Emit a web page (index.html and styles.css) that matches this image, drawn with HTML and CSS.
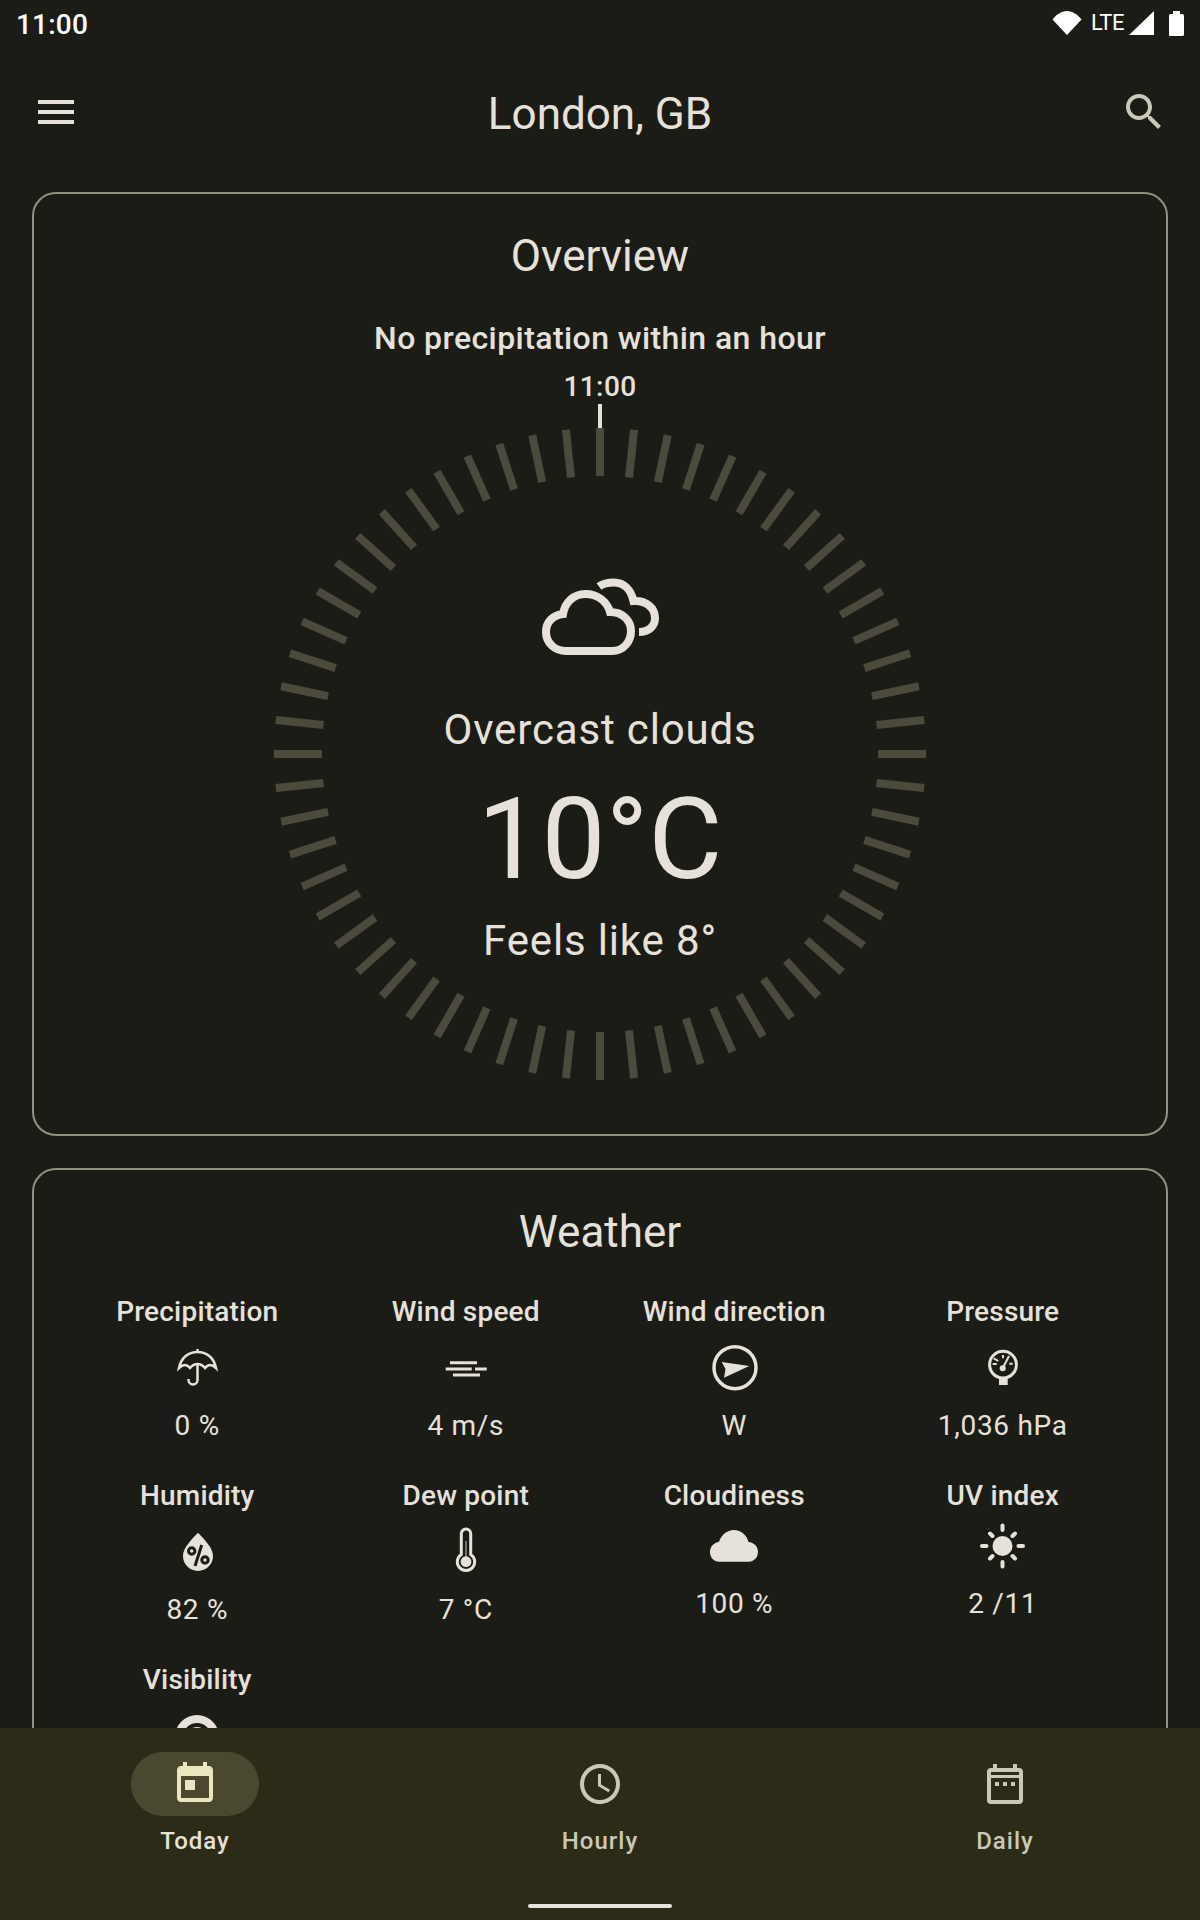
FILE: index.html
```html
<!DOCTYPE html>
<html lang="en">
<head>
    <meta charset="UTF-8">
    <meta name="viewport" content="width=device-width, initial-scale=1.0">
    <title>London, GB</title>
    <link rel="stylesheet" href="styles.css">
</head>
<body>
    <div class="screen">
        <div class="status-bar">
            <span class="status-time">11:00</span>
            <div class="status-icons">
                <svg class="wifi-icon" width="30" height="24" viewBox="0 0 30 24"><path d="M15 24 0.5 8.500C4.500 3.500 9.500 0 15 0s10.500 3.500 14.500 8.500z"/></svg>
                <span class="status-lte">LTE</span>
                <svg class="signal-icon" width="25" height="24" viewBox="0 0 25 24"><path d="M25 0v24H0z"/></svg>
                <svg class="battery-icon" width="15" height="25" viewBox="0 0 15 25"><path d="M4 0h7v3h2.500q1.500 0 1.500 1.500v19q0 1.500-1.500 1.500h-12Q0 25 0 23.500v-19Q0 3 1.500 3H4z"/></svg>
            </div>
        </div>

        <header class="top-bar">
            <svg class="icon-48 menu-icon" viewBox="0 0 24 24"><path d="M3 18h18v-2H3v2zm0-5h18v-2H3v2zm0-7v2h18V6H3z"/></svg>
            <h1>London, GB</h1>
            <svg class="icon-48 search-icon" viewBox="0 0 24 24"><path d="M15.500 14h-.79l-.28-.27C15.410 12.590 16 11.110 16 9.500 16 5.910 13.090 3 9.500 3S3 5.910 3 9.500 5.910 16 9.500 16c1.610 0 3.090-.59 4.230-1.570l.27.28v.79l5 4.990L20.490 19l-4.990-5zm-6 0C7.010 14 5 11.990 5 9.500S7.010 5 9.500 5 14 7.010 14 9.500 11.990 14 9.500 14z"/></svg>
        </header>

        <main class="content">
            <section class="card overview">
                <h2>Overview</h2>
                <p class="rain-note">No precipitation within an hour</p>
                <p class="ring-time">11:00</p>
                <div class="ring-marker"></div>
                <div class="ring">
                    <svg class="ring-ticks" width="652" height="652" viewBox="-326 -326 652 652">
                        <defs>
                            <path id="tick" d="M-4-326h8v48h-8zM-4 278h8v48h-8z"/>
                        </defs>
                        <use href="#tick"/>
                        <use href="#tick" transform="rotate(6)"/>
                        <use href="#tick" transform="rotate(12)"/>
                        <use href="#tick" transform="rotate(18)"/>
                        <use href="#tick" transform="rotate(24)"/>
                        <use href="#tick" transform="rotate(30)"/>
                        <use href="#tick" transform="rotate(36)"/>
                        <use href="#tick" transform="rotate(42)"/>
                        <use href="#tick" transform="rotate(48)"/>
                        <use href="#tick" transform="rotate(54)"/>
                        <use href="#tick" transform="rotate(60)"/>
                        <use href="#tick" transform="rotate(66)"/>
                        <use href="#tick" transform="rotate(72)"/>
                        <use href="#tick" transform="rotate(78)"/>
                        <use href="#tick" transform="rotate(84)"/>
                        <use href="#tick" transform="rotate(90)"/>
                        <use href="#tick" transform="rotate(96)"/>
                        <use href="#tick" transform="rotate(102)"/>
                        <use href="#tick" transform="rotate(108)"/>
                        <use href="#tick" transform="rotate(114)"/>
                        <use href="#tick" transform="rotate(120)"/>
                        <use href="#tick" transform="rotate(126)"/>
                        <use href="#tick" transform="rotate(132)"/>
                        <use href="#tick" transform="rotate(138)"/>
                        <use href="#tick" transform="rotate(144)"/>
                        <use href="#tick" transform="rotate(150)"/>
                        <use href="#tick" transform="rotate(156)"/>
                        <use href="#tick" transform="rotate(162)"/>
                        <use href="#tick" transform="rotate(168)"/>
                        <use href="#tick" transform="rotate(174)"/>
                    </svg>
                    <div class="now">
                        <svg class="now-icon" width="120" height="80" viewBox="541 577 120 80">
                            <path d="M567 651H613C625 651 632 641 632 631 632 620 623 612 611 612 608 601 598 594 586.500 594 575 594 566 602 564 614 554 615 547 622 547 632 547 643 556 651 567 651Z"/>
                            <path d="M600 586.500C604 583.500 609 582.500 615 582.500 625 582.500 632 590 634.500 601 647 600 656 608 656 618 656 626 650 632 640 632"/>
                        </svg>
                        <p class="now-text">Overcast clouds</p>
                        <p class="now-temp">10°C</p>
                        <p class="now-text feels">Feels like 8°</p>
                    </div>
                </div>
            </section>

            <section class="card weather">
                <h2>Weather</h2>
                <div class="metrics">
                    <div class="metric">
                        <span class="metric-label">Precipitation</span>
                        <svg class="metric-icon" viewBox="0 0 48 48">
                            <path class="line slim" d="M6 24C8 14 15 8 24.500 8S41 14 43 24C39 20 35 20 32 24 29.500 21 27 20 24.500 20S19.500 21 17 24C14 20 10 20 6 24ZM24.500 20V36A4.500 4.500 0 0 1 15.500 36V35M24.500 8V5"/>
                        </svg>
                        <span class="metric-value">0 %</span>
                    </div>
                    <div class="metric">
                        <span class="metric-label">Wind speed</span>
                        <svg class="metric-icon" viewBox="0 0 48 48">
                            <path class="line" d="M8 18.700H35M3.700 25H29.700M33 25H44.700M11 31H38"/>
                        </svg>
                        <span class="metric-value">4 m/s</span>
                    </div>
                    <div class="metric">
                        <span class="metric-label">Wind direction</span>
                        <svg class="metric-icon" viewBox="0 0 48 48">
                            <circle class="line thick" cx="25" cy="23.700" r="21"/>
                            <path class="solid" d="M39.300 22 11.700 18 15.500 25 14 33.700z"/>
                        </svg>
                        <span class="metric-value">W</span>
                    </div>
                    <div class="metric">
                        <span class="metric-label">Pressure</span>
                        <svg class="metric-icon" viewBox="0 0 48 48">
                            <circle class="line" cx="24" cy="20.700" r="13.400"/>
                            <circle class="solid" cx="23.700" cy="24.300" r="3"/>
                            <path class="line thin" d="M23.700 24.300 30 12M14.700 14.300 19.300 17M24 11V14.300M13.700 20H17.700M30.300 19.700H33.700"/>
                            <path class="solid" d="M20 33.700h8.700V41H20z"/>
                        </svg>
                        <span class="metric-value">1,036 hPa</span>
                    </div>
                    <div class="metric">
                        <span class="metric-label">Humidity</span>
                        <svg class="metric-icon" viewBox="0 0 48 48">
                            <path class="solid" d="M25 4.700C18 12 10 20 10 28A15 15 0 0 0 40 28C40 20 32 12 25 4.700Z"/>
                            <circle class="cut" cx="18.700" cy="23" r="3.200"/>
                            <circle class="cut" cx="32" cy="32" r="3.200"/>
                            <path class="cut" d="M28.700 17 22 38"/>
                        </svg>
                        <span class="metric-value">82 %</span>
                    </div>
                    <div class="metric">
                        <span class="metric-label">Dew point</span>
                        <svg class="metric-icon" viewBox="0 0 48 48">
                            <path class="line" d="M19.300 26.400V5.700A4.700 4.700 0 0 1 28.700 5.700V26.400A8.700 8.700 0 1 1 19.300 26.400Z"/>
                            <path class="mercury" d="M24 13V29"/>
                            <circle class="solid" cx="24" cy="33.700" r="5.400"/>
                        </svg>
                        <span class="metric-value">7 °C</span>
                    </div>
                    <div class="metric">
                        <span class="metric-label">Cloudiness</span>
                        <svg class="metric-icon short" viewBox="0 0 48 42">
                            <path class="solid" d="M9 33.700C4 33.700 0 29.500 0 24 0 18.500 4 14.500 9 13.700 11.500 7 17 2 24 2 31 2 37 7 38.500 14 44 14.500 48 18.500 48 23.800 48 29.500 44 33.700 38.500 33.700Z"/>
                        </svg>
                        <span class="metric-value">100 %</span>
                    </div>
                    <div class="metric">
                        <span class="metric-label">UV index</span>
                        <svg class="metric-icon short" viewBox="0 0 48 42">
                            <circle class="solid" cx="23.500" cy="18" r="10"/>
                            <path class="line ray" d="M23.500 -2.500V2M23.500 34V38.500M3 18H7.500M39.500 18H44M11 5.500 13.500 8M33.500 28 36 30.500M36 5.500 33.500 8M13.500 28 11 30.500"/>
                        </svg>
                        <span class="metric-value">2 /11</span>
                    </div>
                    <div class="metric">
                        <span class="metric-label">Visibility</span>
                        <svg class="metric-icon" viewBox="0 0 48 48">
                            <circle class="solid" cx="24" cy="25" r="22"/>
                            <circle class="cut wide" cx="24" cy="25" r="12"/>
                        </svg>
                    </div>
                </div>
            </section>
        </main>

        <nav class="bottom-nav">
            <div class="tabs">
                <div class="tab active">
                    <div class="tab-pill">
                        <svg class="icon-48" viewBox="0 0 24 24"><path d="M19 3h-1V1h-2v2H8V1H6v2H5c-1.110 0-1.990.9-1.990 2L3 19c0 1.100.89 2 2 2h14c1.100 0 2-.9 2-2V5c0-1.100-.9-2-2-2zm0 16H5V8h14v11zM7 10h5v5H7z"/></svg>
                    </div>
                    <span>Today</span>
                </div>
                <div class="tab">
                    <div class="tab-pill">
                        <svg class="icon-48" viewBox="0 0 24 24"><path d="M11.990 2C6.470 2 2 6.480 2 12s4.470 10 9.990 10C17.520 22 22 17.520 22 12S17.520 2 11.990 2zM12 20c-4.420 0-8-3.580-8-8s3.580-8 8-8 8 3.580 8 8-3.580 8-8 8zm.5-13H11v6l5.250 3.150.75-1.230-4.500-2.670z"/></svg>
                    </div>
                    <span>Hourly</span>
                </div>
                <div class="tab">
                    <div class="tab-pill">
                        <svg class="icon-48" viewBox="0 -1 24 24"><path fill-rule="evenodd" d="M19 3h-1V1h-2v2H8V1H6v2H5a2 2 0 0 0-2 2v14a2 2 0 0 0 2 2h14a2 2 0 0 0 2-2V5a2 2 0 0 0-2-2zM5 5h14v1.500H5zM5 8h14v11H5zM7 10v2h2v-2zM11 10v2h2v-2zM15 10v2h2v-2z"/></svg>
                    </div>
                    <span>Daily</span>
                </div>
            </div>
            <div class="home-bar"></div>
        </nav>
    </div>
</body>
</html>
```

FILE: styles.css
```css
* {
    box-sizing: border-box;
}
body {
    margin: 0;
    background-color: #1c1c17;
    color: #e6e2da;
    font-family: Roboto, "Noto Sans", sans-serif;
}
h1, h2, p {
    margin: 0;
    font-weight: 400;
}
svg {
    display: block;
}
.screen {
    display: flex;
    flex-direction: column;
    height: 1920px;
    overflow: hidden;
}
.icon-48 {
    width: 48px;
    height: 48px;
    fill: currentColor;
}

/* status bar */
.status-bar {
    flex: none;
    display: flex;
    align-items: center;
    justify-content: space-between;
    height: 46px;
    padding: 0 16px;
    color: #fff;
}
.status-time {
    padding-top: 4px;
    font-size: 28px;
    font-weight: 500;
    line-height: 46px;
    letter-spacing: 0.2px;
}
.status-icons {
    display: flex;
    align-items: center;
    fill: #fff;
}
.status-lte {
    margin: 0 5px 0 9px;
    font-size: 22px;
    line-height: 24px;
    letter-spacing: -0.5px;
}
.battery-icon {
    margin-left: 15px;
}

/* top bar */
.top-bar {
    flex: none;
    display: flex;
    align-items: center;
    justify-content: space-between;
    padding: 40px 32px 54px;
}
.top-bar h1 {
    padding-top: 4px;
    font-size: 44px;
    line-height: 48px;
}
.search-icon {
    color: #cac8b8;
}

/* cards */
.content {
    flex: 1;
    min-height: 0;
    overflow: hidden;
    padding: 0 32px;
}
.card {
    border: 2px solid #939182;
    border-radius: 24px;
    text-align: center;
}
.card h2 {
    font-size: 44px;
    line-height: 52px;
}
.overview {
    padding: 36px 0 54px;
}
.rain-note {
    margin-top: 36px;
    font-size: 32px;
    font-weight: 500;
    line-height: 40px;
    letter-spacing: 0.42px;
}
.ring-time {
    margin-top: 13px;
    font-size: 28px;
    line-height: 32px;
    font-weight: 500;
    letter-spacing: 0.4px;
}
.ring-marker {
    width: 4px;
    height: 24px;
    margin: 1px auto 0;
    background-color: #e6e2da;
}
.ring {
    display: grid;
    justify-content: center;
    height: 652px;
}
.ring-ticks, .now {
    grid-area: 1 / 1;
}
.ring-ticks {
    fill: #4b4a3d;
}
.now {
    padding-top: 149px;
}
.now-icon {
    margin: 0 auto;
    fill: none;
    stroke: currentColor;
    stroke-width: 8;
}
.now-text {
    margin-top: 47px;
    font-size: 42px;
    line-height: 52px;
    letter-spacing: 0.85px;
}
.now-temp {
    margin-top: 18px;
    font-size: 114px;
    line-height: 130px;
}
.now-text.feels {
    margin-top: 11px;
}

/* weather grid */
.weather {
    margin-top: 32px;
    padding-top: 36px;
}
.metrics {
    display: grid;
    grid-template-columns: repeat(4, 268.5px);
    justify-content: center;
    align-items: start;
    row-gap: 34px;
    margin-top: 36px;
}
.metric {
    display: flex;
    flex-direction: column;
    align-items: center;
}
.metric-label {
    font-size: 28px;
    font-weight: 500;
    line-height: 36px;
    letter-spacing: 0.2px;
}
.metric-icon {
    width: 48px;
    height: 48px;
    margin-top: 14px;
    overflow: visible;
}
.metric-icon.short {
    height: 42px;
}
.metric-value {
    margin-top: 16px;
    font-size: 28px;
    line-height: 36px;
    letter-spacing: 0.7px;
}
.line {
    fill: none;
    stroke: #e6e2da;
    stroke-width: 3;
}
.line.slim {
    stroke-width: 2.5;
}
.line.thin {
    stroke-width: 2;
}
.line.thick {
    stroke-width: 3.5;
}
.line.ray {
    stroke-width: 4;
    stroke-linecap: round;
}
.solid {
    fill: #e6e2da;
}
.cut {
    fill: none;
    stroke: #1c1c17;
    stroke-width: 3;
}
.cut.wide {
    stroke-width: 4;
}
.mercury {
    fill: none;
    stroke: #8f8e85;
    stroke-width: 1.5;
}

/* bottom nav */
.bottom-nav {
    flex: none;
    display: flex;
    flex-direction: column;
    align-items: center;
    height: 192px;
    padding-top: 24px;
    background-color: #2c2b17;
}
.tabs {
    display: grid;
    grid-template-columns: repeat(3, 405px);
    justify-content: center;
    width: 100%;
}
.tab {
    display: flex;
    flex-direction: column;
    align-items: center;
    color: #cac8b8;
    font-size: 24px;
    font-weight: 500;
    line-height: 32px;
    letter-spacing: 1px;
}
.tab-pill {
    display: flex;
    align-items: center;
    justify-content: center;
    width: 128px;
    height: 64px;
    margin-bottom: 9px;
    border-radius: 32px;
}
.tab.active {
    color: #e6e2da;
}
.tab.active .tab-pill {
    background-color: #4a4930;
    color: #e9e6c0;
}
.home-bar {
    width: 144px;
    height: 4px;
    margin-top: 47px;
    border-radius: 2px;
    background-color: #e6e2da;
}
```
